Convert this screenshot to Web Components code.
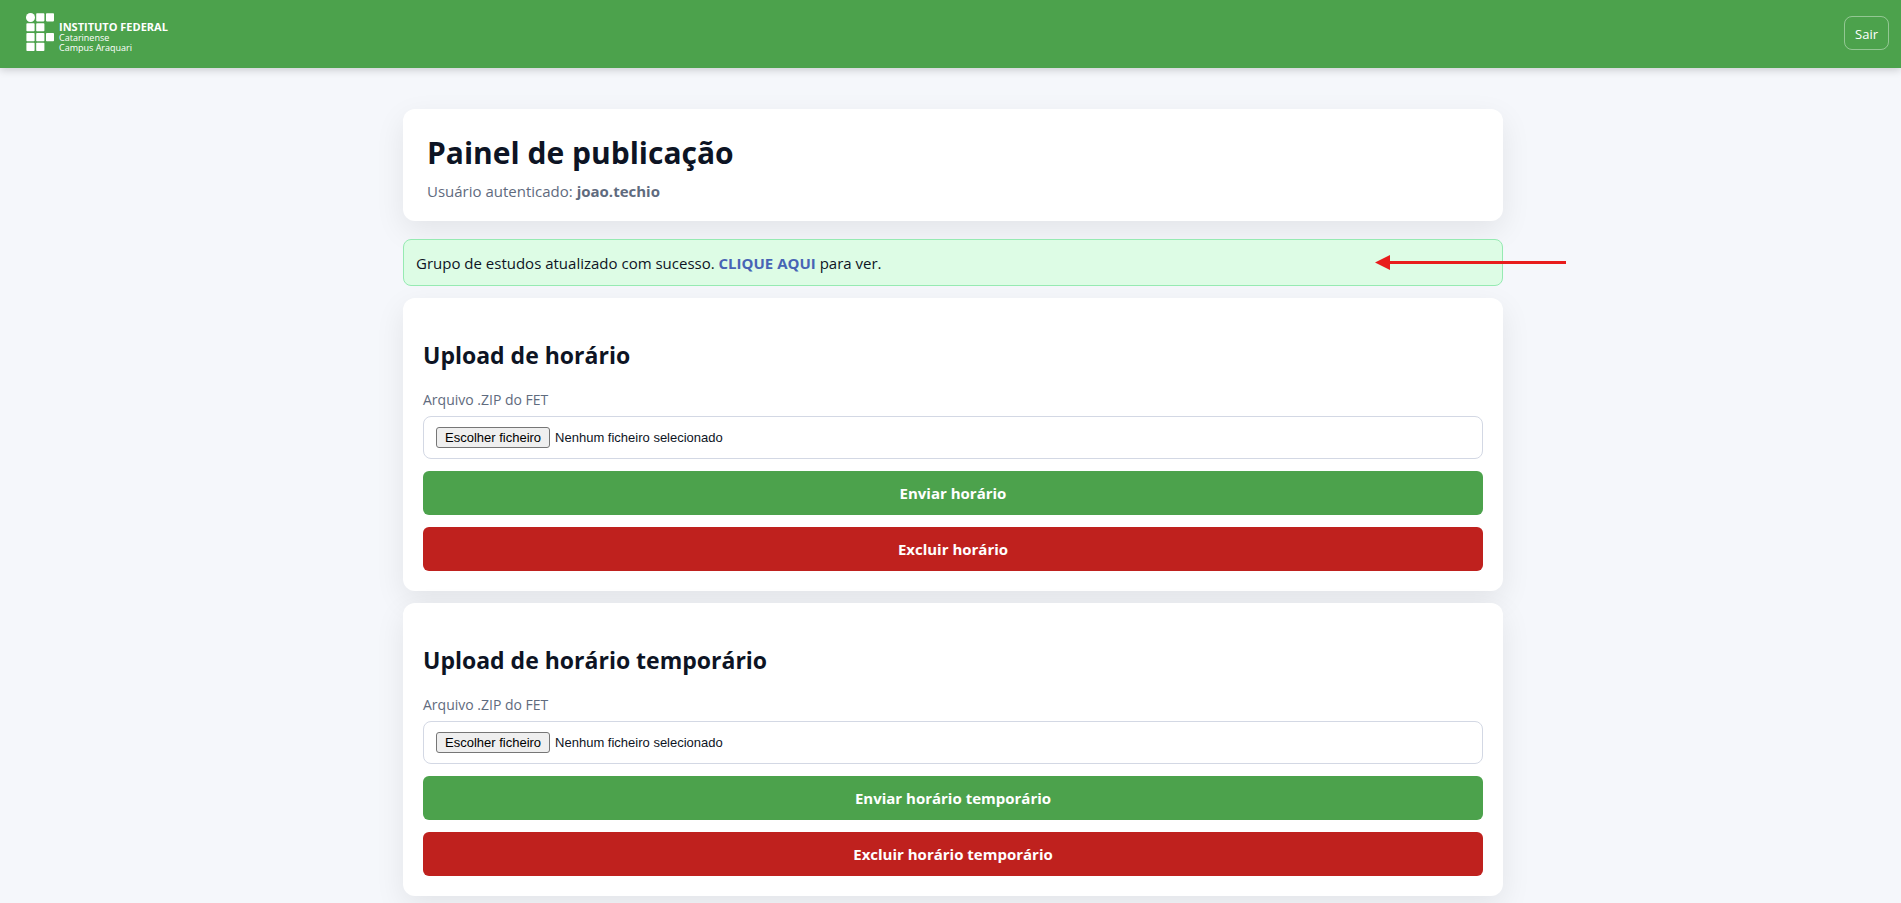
<!DOCTYPE html>
<html lang="pt">
<head>
<meta charset="utf-8">
<meta name="viewport" content="width=device-width, initial-scale=1">
<title>Painel de publicação</title>
<style>
  :root {
    --green: #4ca24c;
    --red: #bf211e;
    --muted: #5f6b7e;
    --text: #0d1424;
    --card-shadow: 0 10px 30px rgba(0, 0, 0, .08);
  }
  body {
    margin: 0;
    min-height: 100vh;
    background: #f5f7fb;
    color: var(--text);
    font: 15px/22px "Open Sans", "Noto Sans", sans-serif;
  }
</style>
</head>
<body>
<publish-app></publish-app>

<template id="publish-app">
  <style>
    :host { display: block; }
    main {
      display: grid;
      gap: 12px;
      max-width: 1100px;
      margin: 0 auto;
      padding: 41px 0 6px 5px;
    }
    status-alert { margin-top: 6px; }
    strong { font-weight: 700; }
  </style>
  <site-header></site-header>
  <main>
    <page-hero>
      <span slot="title">Painel de publicação</span>
      Usuário autenticado: <strong>joao.techio</strong>
    </page-hero>
    <status-alert link-text="CLIQUE AQUI">
      <span slot="before">Grupo de estudos atualizado com sucesso.</span>
      <span slot="after">para ver.</span>
    </status-alert>
    <upload-card subject="horário"></upload-card>
    <upload-card subject="horário temporário"></upload-card>
  </main>
</template>

<template id="site-header">
  <style>
    :host { display: block; position: relative; }
    header {
      display: flex;
      align-items: center;
      justify-content: space-between;
      box-sizing: border-box;
      height: 68px;
      padding: 0 12px 2px 26px;
      background: var(--green);
      color: #fff;
      box-shadow: 0 2px 8px rgba(0, 0, 0, .18);
    }
    button {
      height: 34px;
      padding: 2px 10px 0;
      border: 1px solid rgba(255, 255, 255, .4);
      border-radius: 8px;
      background: transparent;
      color: inherit;
      font: 500 13px/20px "Open Sans", sans-serif;
      cursor: pointer;
    }
  </style>
  <header>
    <institute-logo></institute-logo>
    <button type="button">Sair</button>
  </header>
</template>

<template id="institute-logo">
  <style>
    :host { display: flex; gap: 5px; font-size: 9px; line-height: 10px; }
    svg { display: block; }
    div { padding-top: 8px; }
    b, span { display: block; }
    b { font-size: 11px; line-height: 12px; }
  </style>
  <svg width="28" height="38" viewBox="0 0 28 38" fill="#fff" aria-hidden="true">
    <circle cx="4.5" cy="4.5" r="4.5"/>
    <rect x="10.2" y=".2" width="8.2" height="8.2" rx=".8"/>
    <rect x="20" y=".2" width="8" height="8.2" rx=".8"/>
    <rect x=".4" y="10.2" width="8.2" height="8" rx=".8"/>
    <rect x="10.2" y="10.2" width="8.2" height="8" rx=".8"/>
    <rect x=".4" y="20" width="8.2" height="8.2" rx=".8"/>
    <rect x="10.2" y="20" width="8.2" height="8.2" rx=".8"/>
    <rect x="20" y="20" width="8" height="8.2" rx=".8"/>
    <rect x=".4" y="29.8" width="8.2" height="8.2" rx=".8"/>
    <rect x="10.2" y="29.8" width="8.2" height="8.2" rx=".8"/>
  </svg>
  <div><b>INSTITUTO FEDERAL</b><span>Catarinense</span><span>Campus Araquari</span></div>
</template>

<template id="page-hero">
  <style>
    :host {
      display: block;
      padding: 24px 24px 20px;
      border-radius: 12px;
      background: #fff;
      box-shadow: var(--card-shadow);
    }
    h1 { margin: 0 0 8px; font-size: 30px; line-height: 40px; font-weight: 700; }
    p { margin: 0; color: var(--muted); line-height: 20px; }
  </style>
  <h1><slot name="title"></slot></h1>
  <p><slot></slot></p>
</template>

<template id="status-alert">
  <style>
    :host {
      display: block;
      position: relative;
      padding: 13px 12px 11px;
      border: 1px solid #96eab2;
      border-radius: 8px;
      background: rgba(220, 252, 228, .96);
      line-height: 21px;
    }
    a { color: #4764b5; font-weight: 700; text-decoration: none; }
    svg { position: absolute; top: 15px; right: -65px; z-index: 1; }
  </style>
  <slot name="before"></slot> <a href="#grupo"></a> <slot name="after"></slot>
  <svg width="192" height="16" viewBox="0 0 192 16" fill="#e81c1c" aria-hidden="true">
    <path d="M0 7.5 15 0v6H191v3H15v6Z"/>
  </svg>
</template>

<template id="upload-card">
  <style>
    :host {
      display: block;
      padding: 20px;
      border-radius: 12px;
      background: #fff;
      box-shadow: var(--card-shadow);
    }
    h2 { margin: 20px 0; font-size: 23px; line-height: 34px; font-weight: 700; }
    form { display: grid; gap: 12px; }
    file-field { margin-top: -2px; }
    button {
      height: 44px;
      border: 0;
      border-radius: 6px;
      background: var(--green);
      color: #fff;
      font: 700 15px/20px "Open Sans", sans-serif;
      cursor: pointer;
    }
    .danger { background: var(--red); }
  </style>
  <h2></h2>
  <form>
    <file-field></file-field>
    <button type="button" class="send"></button>
    <button type="button" class="danger"></button>
  </form>
</template>

<template id="file-field">
  <style>
    :host { display: grid; gap: 6px; }
    .caption { color: var(--muted); font-size: 14px; line-height: 20px; }
    .box {
      display: flex;
      align-items: center;
      gap: 5px;
      position: relative;
      padding: 10px 12px;
      border: 1px solid #d3d8e4;
      border-radius: 8px;
      color: var(--text);
      font: 13px/17px "Liberation Sans", Arial, sans-serif;
    }
    .choose {
      padding: 1px 8px;
      border: 1px solid #767676;
      border-radius: 3px;
      background: #efefef;
      color: #000;
    }
    input { position: absolute; inset: 0; width: 100%; opacity: 0; }
    .box:focus-within { outline: 2px solid var(--green); }
  </style>
  <label class="caption" for="file">Arquivo .ZIP do FET</label>
  <div class="box">
    <span class="choose" aria-hidden="true">Escolher ficheiro</span>
    <span class="name">Nenhum ficheiro selecionado</span>
    <input id="file" type="file" accept=".zip">
  </div>
</template>

<script>
  class TemplateElement extends HTMLElement {
    constructor() {
      super();
      const template = document.getElementById(this.localName);
      this.attachShadow({ mode: 'open' }).append(template.content.cloneNode(true));
    }
    find(selector) { return this.shadowRoot.querySelector(selector); }
  }

  class SiteHeader extends TemplateElement {}
  class InstituteLogo extends TemplateElement {}
  class PageHero extends TemplateElement {}

  class StatusAlert extends TemplateElement {
    connectedCallback() {
      this.find('a').textContent = this.getAttribute('link-text');
    }
  }

  class FileField extends TemplateElement {
    connectedCallback() {
      const input = this.find('input');
      input.addEventListener('change', () => {
        this.find('.name').textContent =
          input.files.length ? input.files[0].name : 'Nenhum ficheiro selecionado';
      });
    }
  }

  class UploadCard extends TemplateElement {
    connectedCallback() {
      const subject = this.getAttribute('subject');
      this.find('h2').textContent = `Upload de ${subject}`;
      this.find('.send').textContent = `Enviar ${subject}`;
      this.find('.danger').textContent = `Excluir ${subject}`;
    }
  }

  class PublishApp extends TemplateElement {}

  customElements.define('site-header', SiteHeader);
  customElements.define('institute-logo', InstituteLogo);
  customElements.define('page-hero', PageHero);
  customElements.define('status-alert', StatusAlert);
  customElements.define('file-field', FileField);
  customElements.define('upload-card', UploadCard);
  customElements.define('publish-app', PublishApp);
</script>
</body>
</html>
